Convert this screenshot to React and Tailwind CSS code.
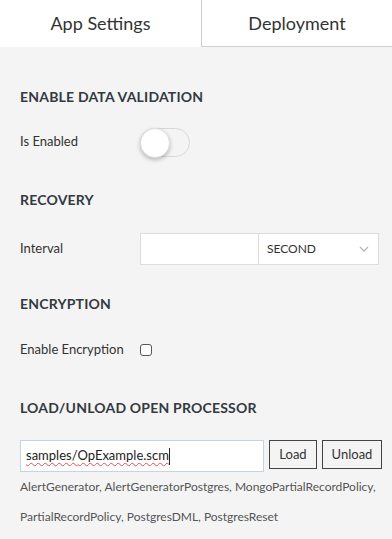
import React from "react";

const Heading = ({ children }) => (
  <h2 className="text-[14px] font-bold tracking-[0.2px] text-[#333a40] leading-none">{children}</h2>
);

export default function App() {
  return (
    <div className="w-[392px] h-[539px] overflow-hidden bg-[#f4f4f4] font-['Lato',sans-serif] text-[#333]">
      <div className="flex h-[47px] bg-white">
        <div className="w-[201px] flex items-center justify-center text-[18px] text-[#333]">App Settings</div>
        <div className="flex-1 flex items-center justify-center text-[18px] text-[#333] border-l border-b border-[#cfcfcf]">
          Deployment
        </div>
      </div>
      <div className="flex">
        <div className="flex-1 pl-5 pr-[10px]">
          <div className="pt-[43px]">
            <Heading>ENABLE DATA VALIDATION</Heading>
            <div className="flex items-center mt-[23px] h-[30px]">
              <span className="w-[120px] text-[13px]">Is Enabled</span>
              <div className="relative w-[50px] h-[29px] rounded-full border border-[#d8d8d8] bg-[#f4f4f4]">
                <div className="absolute -left-px -top-px w-[30px] h-[30px] rounded-full bg-white shadow-[0_2px_4px_rgba(0,0,0,0.25)] border border-[#e0e0e0]"></div>
              </div>
            </div>
          </div>
          <div className="pt-[36px]">
            <Heading>RECOVERY</Heading>
            <div className="flex items-center mt-[26px]">
              <span className="w-[120px] text-[13px]">Interval</span>
              <div className="flex h-[32px] border border-[#dcdcdc] bg-white">
                <input className="w-[118px] h-full outline-none border-r border-[#dcdcdc] bg-white" />
                <div className="w-[119px] flex items-center justify-between pl-2 pr-[9px] text-[12px] text-[#333]">
                  <span>SECOND</span>
                  <svg width="10" height="6" viewBox="0 0 10 6" fill="none" stroke="#b5b9bd" strokeWidth="1.3">
                    <path d="M1 1l4 4 4-4" />
                  </svg>
                </div>
              </div>
            </div>
          </div>
          <div className="pt-[32px]">
            <Heading>ENCRYPTION</Heading>
            <div className="flex items-center mt-[29px] h-[20px]">
              <span className="w-[120px] text-[13px]">Enable Encryption</span>
              <span className="w-[12px] h-[12px] rounded-[3px] border border-[#555] bg-white"></span>
            </div>
          </div>
          <div className="pt-[41px]">
            <Heading>LOAD/UNLOAD OPEN PROCESSOR</Heading>
            <div className="flex items-start mt-[25px] gap-[5px]">
              <div className="w-[244px] h-[32px] border border-[#c4d4e4] bg-white flex items-center pl-[5px] text-[13px] text-[#222]">
                <span className="underline decoration-wavy decoration-[#e05050] decoration-1 underline-offset-2">samples/</span>
                <span className="underline decoration-wavy decoration-[#e05050] decoration-1 underline-offset-2">OpExample.scm</span>
                <span className="w-px h-[17px] bg-[#222]"></span>
              </div>
              <button className="w-[48px] h-[29px] border border-[#444] bg-[#f4f4f4] text-[13px] text-[#333]">Load</button>
              <button className="w-[60px] h-[29px] border border-[#444] bg-[#f4f4f4] text-[13px] text-[#333]">Unload</button>
            </div>
            <p className="text-[12px] leading-[30px] text-[#555]">
              AlertGenerator, AlertGeneratorPostgres, MongoPartialRecordPolicy, PartialRecordPolicy, PostgresDML, PostgresReset
            </p>
          </div>
        </div>
        <div className="w-px mt-[2px] mr-[2px] h-[492px] bg-[#dedede]"></div>
      </div>
    </div>
  );
}
